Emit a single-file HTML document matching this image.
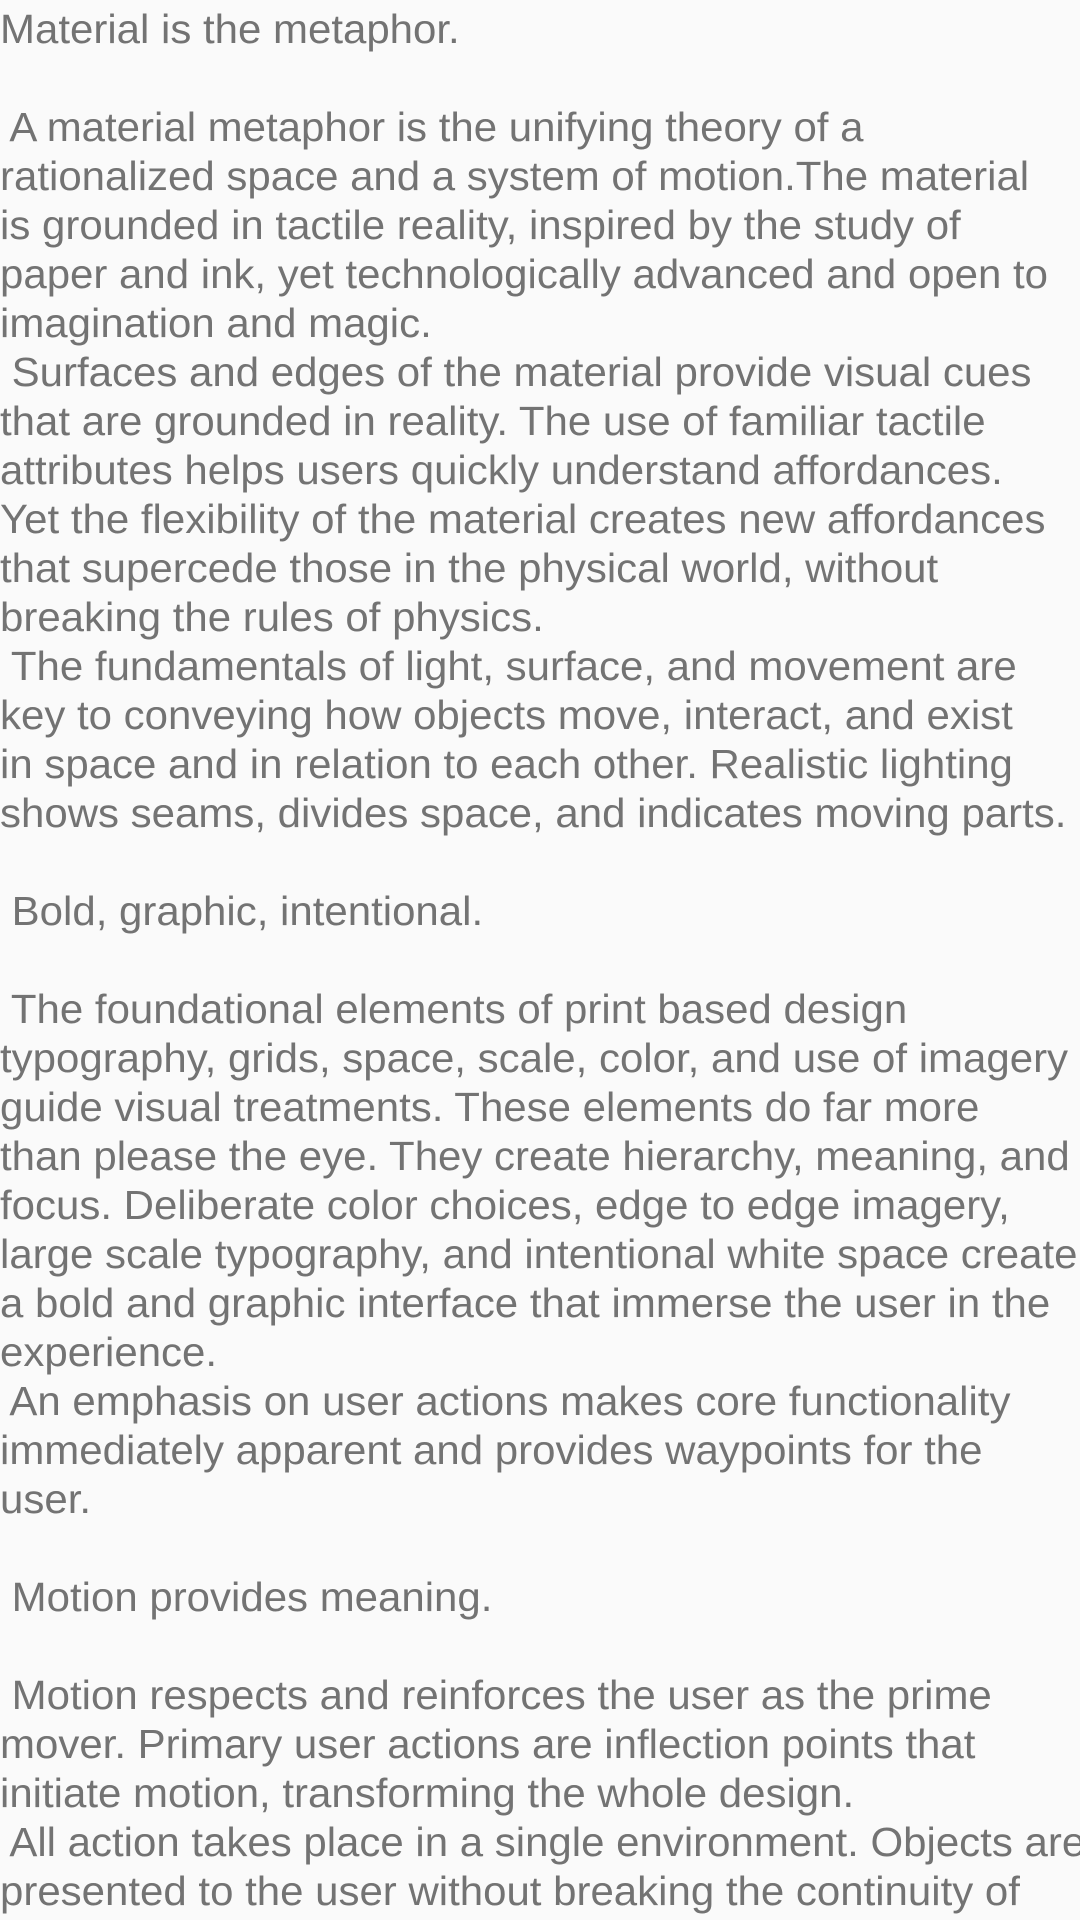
<!DOCTYPE html>
<html><head><meta charset="utf-8"><style>
html,body{margin:0;padding:0;background:#fafafa;width:1080px;height:1920px;overflow:hidden}
.t{font-family:"Liberation Sans",sans-serif;font-size:41px;line-height:49px;color:#737373;white-space:pre;padding-top:5px;transform:scaleX(1.024);transform-origin:0 0}
</style></head><body><div class="t">Material is the metaphor.

 A material metaphor is the unifying theory of a
rationalized space and a system of motion.The material
is grounded in tactile reality, inspired by the study of
paper and ink, yet technologically advanced and open to
imagination and magic.
 Surfaces and edges of the material provide visual cues
that are grounded in reality. The use of familiar tactile
attributes helps users quickly understand affordances.
Yet the flexibility of the material creates new affordances
that supercede those in the physical world, without
breaking the rules of physics.
 The fundamentals of light, surface, and movement are
key to conveying how objects move, interact, and exist
in space and in relation to each other. Realistic lighting
shows seams, divides space, and indicates moving parts.

 Bold, graphic, intentional.

 The foundational elements of print based design
typography, grids, space, scale, color, and use of imagery
guide visual treatments. These elements do far more
than please the eye. They create hierarchy, meaning, and
focus. Deliberate color choices, edge to edge imagery,
large scale typography, and intentional white space create
a bold and graphic interface that immerse the user in the
experience.
 An emphasis on user actions makes core functionality
immediately apparent and provides waypoints for the
user.

 Motion provides meaning.

 Motion respects and reinforces the user as the prime
mover. Primary user actions are inflection points that
initiate motion, transforming the whole design.
 All action takes place in a single environment. Objects are
presented to the user without breaking the continuity of</div></body></html>
